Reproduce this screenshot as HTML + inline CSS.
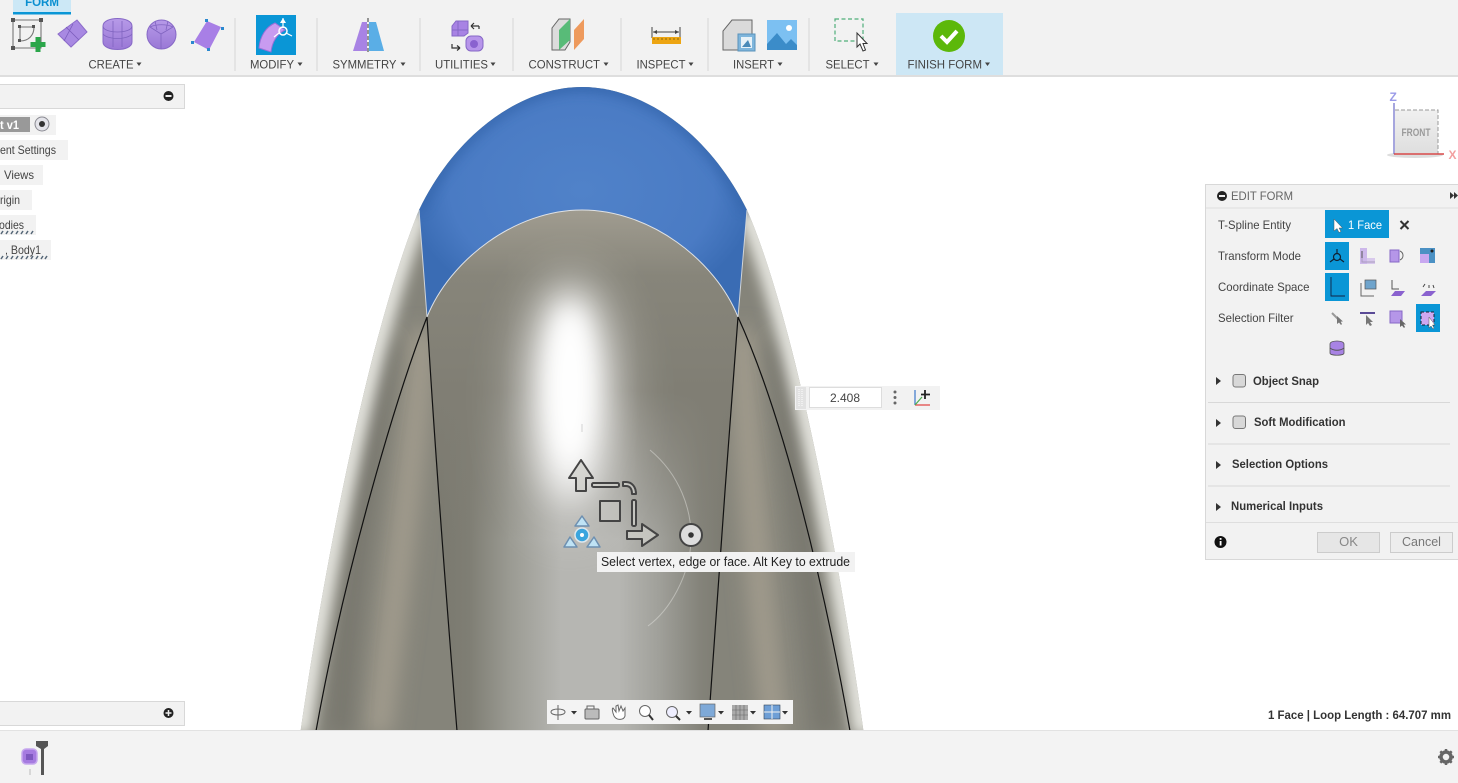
<!DOCTYPE html>
<html><head><meta charset="utf-8"><style>
html,body{margin:0;padding:0;background:#fff;width:1458px;height:783px;overflow:hidden}
svg{display:block}
text{font-family:"Liberation Sans",sans-serif;font-size:12px;fill:#444}
.b{font-weight:bold;fill:#333}
.m{text-anchor:middle}
</style></head><body>
<svg width="1458" height="783" viewBox="0 0 1458 783" xmlns="http://www.w3.org/2000/svg">
<defs>
<clipPath id="sil"><path d="M300 735C325 560 370 330 419 210C455 135 520 87 582 87C645 87 710 135 747 210C795 320 840 560 864 735Z"/></clipPath>
<clipPath id="mid"><path d="M427 317C435 450 448 620 457 735L708 735C716 610 728 450 738 317C715 260 650 210 582 210C515 210 450 260 427 317Z"/></clipPath>
<linearGradient id="cg" gradientUnits="userSpaceOnUse" x1="430" y1="0" x2="735" y2="0">
<stop offset="0" stop-color="#78776d"/><stop offset=".13" stop-color="#7f7e74"/><stop offset=".26" stop-color="#9a9a92"/><stop offset=".43" stop-color="#b6b6b2"/><stop offset=".62" stop-color="#b6b6b2"/><stop offset=".75" stop-color="#a0a09a"/><stop offset=".885" stop-color="#84837a"/><stop offset="1" stop-color="#78776d"/></linearGradient>
<linearGradient id="topg" gradientUnits="userSpaceOnUse" x1="0" y1="210" x2="0" y2="540">
<stop offset="0" stop-color="#a09c90"/><stop offset=".2" stop-color="#87857a"/><stop offset=".55" stop-color="#807e74"/><stop offset="1" stop-color="#807e74" stop-opacity="0"/></linearGradient>
<radialGradient id="bl" gradientUnits="userSpaceOnUse" cx="582" cy="190" r="175" gradientTransform="translate(582 190) scale(1 .72) translate(-582 -190)">
<stop offset="0" stop-color="#5082c9"/><stop offset=".75" stop-color="#4a7bc4"/><stop offset="1" stop-color="#3a6cb4"/></radialGradient>
<filter id="b30" x="-200%" y="-80%" width="500%" height="260%"><feGaussianBlur stdDeviation="24"/></filter>
<filter id="b18" x="-150%" y="-60%" width="400%" height="220%"><feGaussianBlur stdDeviation="17"/></filter>
<filter id="b8" x="-150%" y="-60%" width="400%" height="220%"><feGaussianBlur stdDeviation="11"/></filter>
<filter id="bv" filterUnits="userSpaceOnUse" x="250" y="80" width="660" height="700"><feGaussianBlur stdDeviation="7"/></filter>
<filter id="bw" filterUnits="userSpaceOnUse" x="250" y="100" width="660" height="680"><feGaussianBlur stdDeviation="10"/></filter>
<filter id="bb" filterUnits="userSpaceOnUse" x="380" y="60" width="400" height="200"><feGaussianBlur stdDeviation="5"/></filter>
<linearGradient id="pu" x1="0" y1="0" x2="0" y2="1"><stop offset="0" stop-color="#b79ae8"/><stop offset="1" stop-color="#9a78d6"/></linearGradient>
<linearGradient id="cube" x1="0" y1="0" x2="0" y2="1"><stop offset="0" stop-color="#f0f0f0"/><stop offset="1" stop-color="#dedede"/></linearGradient>
</defs>
<rect width="1458" height="783" fill="#fff"/>

<!-- body -->
<g clip-path="url(#sil)">
<rect x="290" y="80" width="590" height="660" fill="#85847a"/>
<g fill="none">
<path d="M423 330C418 420 395 600 378 735" stroke="#a19b8d" stroke-width="26" filter="url(#bw)"/>
<path d="M742 330C745 420 760 600 775 735" stroke="#a19b8d" stroke-width="26" filter="url(#bw)"/>
<path d="M385 340C375 420 345 600 340 735" stroke="#74736a" stroke-width="18" filter="url(#bw)"/>
<path d="M780 340C790 420 815 600 825 735" stroke="#74736a" stroke-width="18" filter="url(#bw)"/>
<path d="M300 735C325 560 370 330 419 210" stroke="#e6e6e0" stroke-width="22" filter="url(#bv)"/>
<path d="M864 735C840 560 795 320 747 210" stroke="#e6e6e0" stroke-width="22" filter="url(#bv)"/>
</g>
<g clip-path="url(#mid)">
<rect x="420" y="200" width="330" height="540" fill="url(#cg)"/>
<rect x="420" y="200" width="330" height="345" fill="url(#topg)"/>
<ellipse cx="570" cy="400" rx="60" ry="130" fill="#fff" opacity=".35" filter="url(#b30)"/>
<ellipse cx="570" cy="395" rx="36" ry="105" fill="#fff" opacity=".9" filter="url(#b18)"/>
<ellipse cx="570" cy="385" rx="20" ry="75" fill="#fff" filter="url(#b8)"/>
</g>
<path d="M419 210C455 135 520 87 582 87C645 87 710 135 747 210L738 317C715 260 650 210 582 210C515 210 450 260 427 317Z" fill="url(#bl)"/>
<path d="M419 210C455 135 520 87 582 87C645 87 710 135 747 210" fill="none" stroke="#3566ac" stroke-width="12" filter="url(#bb)" opacity=".7"/>
</g>
<path d="M427 317C450 260 515 210 582 210C650 210 715 260 738 317" fill="none" stroke="#dfe2e6" stroke-width="1"/>
<path d="M419 210L427 317M747 210L738 317" fill="none" stroke="#d0d4d8" stroke-width="1"/>
<path d="M427 317C395 400 345 570 316 731M427 317C435 450 448 620 457 731M738 317C728 450 716 610 708 731M738 317C785 420 825 590 850 731" fill="none" stroke="#111" stroke-width="1.200"/>
<path d="M650 450C680 475 692 510 691 540C690 575 670 610 648 626" fill="none" stroke="#e8e8e4" stroke-width="1" opacity=".45"/>
<path d="M582 424v8" stroke="#999" stroke-width="1" opacity=".4"/>

<!-- gizmo -->
<g fill="#cfcfca" fill-opacity=".75" stroke="#444" stroke-width="2" stroke-linejoin="round">
<path d="M581 460L593 478H586V491H576V478H569Z"/>
<rect x="592" y="483" width="27" height="4" rx="1.500"/>
<path d="M623 482h3c6 0 10 5 10 12h-4c0-5-2-8-6-8h-3z"/>
<rect x="632" y="500" width="4" height="26" rx="1.500"/>
<rect x="600" y="501" width="20" height="20" fill-opacity=".45"/>
<path d="M627 531H642V524L658 535L642 546V539H627Z"/>
</g>
<circle cx="691" cy="535" r="11" fill="#ddd" stroke="#444" stroke-width="2"/><circle cx="691" cy="535" r="2.800" fill="#333"/>
<g stroke="#6d8fb0" stroke-width="1.500" fill="#bfe3f5" stroke-linejoin="round">
<path d="M582 516L589 526H575Z"/><path d="M570 537L577 547H564Z"/><path d="M594 537L600 547H587Z"/>
</g>
<circle cx="582" cy="535" r="7" fill="#3aa5de" stroke="#dfe8ee" stroke-width="1.500"/><circle cx="582" cy="535" r="2" fill="#fff"/>

<!-- tooltip -->
<rect x="597" y="552" width="258" height="20" fill="#f2f2f2"/>
<text x="601" y="566" textLength="249" lengthAdjust="spacingAndGlyphs" style="fill:#222;font-size:12.500px">Select vertex, edge or face. Alt Key to extrude</text>

<!-- value input -->
<rect x="795" y="386" width="145" height="24" fill="#f2f2f2"/>
<rect x="796" y="387" width="10" height="22" fill="#e2e2e2"/>
<path d="M799 389v18M802 389v18" stroke="#fff" stroke-dasharray="1 1"/>
<rect x="809.500" y="387.500" width="72" height="20" fill="#fff" stroke="#ddd"/>
<text x="845" y="402" class="m">2.408</text>
<circle cx="895" cy="392" r="1.500" fill="#666"/><circle cx="895" cy="397.500" r="1.500" fill="#666"/><circle cx="895" cy="403" r="1.500" fill="#666"/>
<path d="M915 390V405" stroke="#3b78c9" stroke-width="1.200"/><path d="M915 405H930" stroke="#e2403f" stroke-width="1.200"/><path d="M915 405L922 397" stroke="#4caf50" stroke-width="1.200"/>
<path d="M925 390v9M921 394.500h9" stroke="#222" stroke-width="1.800"/>

<!-- toolbar -->
<rect x="0" y="0" width="1458" height="75" fill="#f2f2f2"/>
<rect x="0" y="75" width="1458" height="2" fill="#dedede"/>
<rect x="13" y="0" width="58" height="13" fill="#cce8f6"/>
<rect x="13" y="12" width="58" height="2.500" fill="#0a96d6"/>
<text x="42" y="6" class="m" style="fill:#0a8fd0;font-weight:bold;font-size:11.500px">FORM</text>
<rect x="896" y="13" width="107" height="62" fill="#cde7f5"/>
<path d="M235 18V71M317 18V71M420 18V71M513 18V71M621 18V71M708 18V71M809 18V71" stroke="#e0e0e0" stroke-width="1.500"/>
<g>
<text x="88.500" y="68.500" textLength="45" lengthAdjust="spacingAndGlyphs">CREATE</text>
<text x="250" y="68.500" textLength="44" lengthAdjust="spacingAndGlyphs">MODIFY</text>
<text x="332.500" y="68.500" textLength="64" lengthAdjust="spacingAndGlyphs">SYMMETRY</text>
<text x="435" y="68.500" textLength="53" lengthAdjust="spacingAndGlyphs">UTILITIES</text>
<text x="528.500" y="68.500" textLength="71.500" lengthAdjust="spacingAndGlyphs">CONSTRUCT</text>
<text x="636.500" y="68.500" textLength="49" lengthAdjust="spacingAndGlyphs">INSPECT</text>
<text x="733" y="68.500" textLength="41" lengthAdjust="spacingAndGlyphs">INSERT</text>
<text x="825.500" y="68.500" textLength="44" lengthAdjust="spacingAndGlyphs">SELECT</text>
<text x="907.500" y="68.500" textLength="74.500" lengthAdjust="spacingAndGlyphs">FINISH FORM</text>
</g>
<path d="M136.500 62.500h5l-2.500 3.500zM297.500 62.500h5l-2.500 3.500zM400.500 62.500h5l-2.500 3.500zM490.500 62.500h5l-2.500 3.500zM603.500 62.500h5l-2.500 3.500zM688.500 62.500h5l-2.500 3.500zM777.500 62.500h5l-2.500 3.500zM873.500 62.500h5l-2.500 3.500zM985 62.500h5l-2.500 3.500z" fill="#444"/>
<!-- create icons -->
<g fill="none" stroke="#777" stroke-width="1.100">
<path d="M13 20H41V48H13Z"/><path d="M20 27H34M20 27V41M34 27C34 35 29 41 20 41"/>
</g>
<g fill="#555"><rect x="11" y="18" width="4" height="4"/><rect x="39" y="18" width="4" height="4"/><rect x="11" y="46" width="4" height="4"/><rect x="18" y="25" width="3" height="3"/><rect x="32" y="25" width="3" height="3"/><rect x="18" y="39" width="3" height="3"/></g>
<path d="M35.500 37h5v5h5v5h-5v5h-5v-5h-5v-5h5z" fill="#2ba64a"/>
<path d="M58 34L77 20L87 32L71 47Z" fill="#a889e2" stroke="#8c6cca"/><path d="M66 27L79 40M73 24L64 41" stroke="#7a5cbc" fill="none" stroke-width=".8"/>
<path d="M103 26C103 16 132 16 132 26V42C132 52 103 52 103 42Z" fill="url(#pu)" stroke="#8668c6"/><path d="M103 26C103 34 132 34 132 26M103 34C108 40 127 40 132 34M113 21V47M122 21V47" fill="none" stroke="#8064c0" stroke-width=".8"/>
<circle cx="161.500" cy="34.500" r="14.500" fill="url(#pu)" stroke="#8668c6"/><path d="M150 27C156 24 167 24 173 27M161 34L150 27M161 34L173 27M161 34V49M155 21L157 30M168 21L166 30" fill="none" stroke="#8064c0" stroke-width=".8"/>
<path d="M207 21L221 27L209 50L194 42Z" fill="#a87fe6"/>
<g fill="#2a88cf"><rect x="205" y="19" width="3" height="3"/><rect x="221" y="27" width="3" height="3"/><rect x="207" y="48" width="3" height="3"/><rect x="191" y="41" width="3" height="3"/></g>
<!-- modify -->
<rect x="256" y="15" width="40" height="40" fill="#0a96d6"/>
<path d="M259 48C260 36 266 27 275 23L285 30C277 34 272 42 271 52Z" fill="#c89bf0" stroke="#9a70d8"/>
<circle cx="283" cy="31" r="4" fill="none" stroke="#fff" stroke-width="1.500"/><path d="M283 18V28M279 33L274 37M286 33L292 36" stroke="#fff" stroke-width="1.200"/><path d="M283 18l-3 5h6z" fill="#fff"/>
<!-- symmetry -->
<path d="M362 22L353 51H367V22Z" fill="#a883e4"/>
<path d="M369 22H376L384 51H369Z" fill="#5aaee6"/>
<path d="M368 18V54" stroke="#555" stroke-dasharray="4 2" stroke-width="1.200"/>
<!-- utilities -->
<path d="M452 26L456 21H468V33L464 36H452Z" fill="#a883e4" stroke="#8668c6"/><path d="M458 21V36M452 30H468" stroke="#8668c6"/>
<path d="M479 26H471M471 26l3-3M471 26l3 3M479 26V29" fill="none" stroke="#333" stroke-width="1.200"/>
<path d="M452 44V48H460M460 48l-3-2.500M460 48l-3 2.500" fill="none" stroke="#333" stroke-width="1.200"/>
<rect x="466" y="36" width="17" height="15" rx="5" fill="#b795ea" stroke="#8668c6"/><circle cx="474" cy="44" r="4" fill="#8a62cf"/>
<!-- construct -->
<path d="M552 50V28L559 19H570V42L565 50Z" fill="#dcdcdc" stroke="#666"/><path d="M559 50V30L570 19V40Z" fill="#58bb78"/>
<path d="M574 50V30L584 19V39Z" fill="#ee9a5d"/>
<!-- inspect -->
<path d="M652 27V38M680 27V38M653 32H679" stroke="#444" fill="none"/><path d="M653 32l4-2v4zM679 32l-4-2v4z" fill="#444"/>
<rect x="652" y="37" width="29" height="7" fill="#eda512"/><path d="M654 38v2M658 38v2M662 38v2M666 38v2M670 38v2M674 38v2M678 38v2" stroke="#8a6a10"/>
<!-- insert -->
<path d="M723 50V31L732 20H752V36H739V50Z" fill="#dadada" stroke="#666"/>
<rect x="738" y="34" width="17" height="17" fill="#7fb6dc" stroke="#5a93bb"/><rect x="741" y="37" width="11" height="11" fill="#e8f2f8"/><path d="M742 47L748 40L751 47Z" fill="#4a8ab8"/>
<rect x="767" y="20" width="30" height="30" fill="#7cc0f2"/><circle cx="789" cy="28" r="3" fill="#fff"/><path d="M767 44L777 33L786 44L791 39L797 45V50H767Z" fill="#3b8cc9"/>
<!-- select -->
<rect x="835" y="19" width="28" height="22" fill="none" stroke="#4fae7a" stroke-width="1.200" stroke-dasharray="4 2.500"/>
<path d="M857 33V47L860 44L863 51L865.500 50L863 43.500H867Z" fill="#fff" stroke="#333"/>
<!-- finish -->
<circle cx="949" cy="36" r="16" fill="#5cb80a"/>
<path d="M941 36L947 42L957 31" fill="none" stroke="#fff" stroke-width="4"/>

<!-- browser -->
<rect x="-2" y="84.500" width="186.500" height="24" fill="#f2f2f2" stroke="#d8d8d8"/>
<circle cx="168.500" cy="96" r="5" fill="#222"/><rect x="165.500" y="95" width="6" height="2" fill="#eee"/>
<rect x="0" y="115" width="56" height="20" fill="#f2f2f2"/><rect x="0" y="117" width="30" height="15" fill="#999"/>
<text x="0" y="129" textLength="19" lengthAdjust="spacingAndGlyphs" style="fill:#fff;font-weight:bold">t v1</text>
<circle cx="42" cy="124" r="7" fill="#e4e4ea" stroke="#8a8a92"/><circle cx="42" cy="124" r="3" fill="#333"/>
<rect x="0" y="140" width="68" height="20" fill="#f2f2f2"/><text x="0" y="154" textLength="56" lengthAdjust="spacingAndGlyphs">ent Settings</text>
<rect x="0" y="165" width="43" height="20" fill="#f2f2f2"/><text x="4" y="179" textLength="30" lengthAdjust="spacingAndGlyphs">Views</text>
<rect x="0" y="190" width="32" height="20" fill="#f2f2f2"/><text x="0" y="204" textLength="20" lengthAdjust="spacingAndGlyphs">rigin</text>
<rect x="0" y="215" width="36" height="20" fill="#f2f2f2"/><text x="-1" y="229" textLength="25" lengthAdjust="spacingAndGlyphs">odies</text>
<path d="M1 234l2-3M6 234l2-3M11 234l2-3M16 234l2-3M21 234l2-3M26 234l2-3M31 234l2-3" stroke="#567" stroke-width="1.500"/>
<rect x="0" y="240" width="51" height="20" fill="#f2f2f2"/><text x="5" y="254" textLength="36" lengthAdjust="spacingAndGlyphs">, Body1</text>
<path d="M1 259l2-3M6 259l2-3M11 259l2-3M16 259l2-3M21 259l2-3M26 259l2-3M31 259l2-3M36 259l2-3M41 259l2-3M45 259l2-3" stroke="#567" stroke-width="1.500"/>
<rect x="-2" y="701.500" width="186.500" height="24" fill="#f2f2f2" stroke="#d8d8d8"/>
<circle cx="168.500" cy="713" r="5" fill="#222"/><path d="M165.500 713h6M168.500 710v6" stroke="#eee" stroke-width="1.500"/>

<!-- viewcube -->
<ellipse cx="1415" cy="155" rx="28" ry="3" fill="#ddd"/>
<rect x="1395" y="110" width="43" height="44" fill="url(#cube)"/>
<path d="M1395 110H1438V154" fill="none" stroke="#999" stroke-dasharray="4 2"/>
<path d="M1394 103V154" stroke="#6a6ac8" stroke-width="1.200"/><path d="M1394 154H1444" stroke="#d84a4a" stroke-width="1.500"/>
<text x="1416" y="136" class="m" textLength="29" lengthAdjust="spacingAndGlyphs" style="fill:#9a9a9a;font-weight:bold;font-size:11px">FRONT</text>
<text x="1389.500" y="101" style="fill:#9a9ae8;font-weight:bold">Z</text>
<text x="1448.500" y="159" style="fill:#f2a0a0;font-weight:bold">X</text>

<!-- edit form panel -->
<rect x="1205.500" y="184.500" width="260" height="375" fill="#f2f2f2" stroke="#d8d8d8"/>
<path d="M1206 208H1458" stroke="#dedede"/>
<circle cx="1222" cy="196" r="5" fill="#222"/><rect x="1219" y="195" width="6" height="2" fill="#eee"/>
<text x="1231" y="200" textLength="62" lengthAdjust="spacingAndGlyphs" style="fill:#666">EDIT FORM</text>
<path d="M1450 192v7l4-3.500zM1454 192v7l4-3.500z" fill="#333"/>
<text x="1218" y="229" textLength="73" lengthAdjust="spacingAndGlyphs">T-Spline Entity</text>
<text x="1218" y="260" textLength="83" lengthAdjust="spacingAndGlyphs">Transform Mode</text>
<text x="1218" y="291" textLength="91.500" lengthAdjust="spacingAndGlyphs">Coordinate Space</text>
<text x="1218" y="322" textLength="75.500" lengthAdjust="spacingAndGlyphs">Selection Filter</text>
<rect x="1325" y="210" width="64" height="28" fill="#0a96d6"/>
<path d="M1334 219V231L1337 228.500L1339 232.500L1341 231.500L1339 228H1342.500Z" fill="#fff" stroke="#555" stroke-width=".5"/>
<text x="1348" y="229" textLength="34" lengthAdjust="spacingAndGlyphs" style="fill:#fff">1 Face</text>
<path d="M1400.500 221L1408.500 229M1408.500 221L1400.500 229" stroke="#333" stroke-width="2"/>
<rect x="1325" y="242" width="24" height="28" fill="#0a96d6"/>
<rect x="1325" y="273" width="24" height="28" fill="#0a96d6"/>
<rect x="1416" y="304" width="24" height="28" fill="#0a96d6"/>
<!-- transform row -->
<circle cx="1337" cy="257" r="3.500" fill="none" stroke="#123" stroke-width="1.200"/><path d="M1337 249V254M1334 259L1330 262M1340 259L1344 262" stroke="#123" stroke-width="1.200"/>
<rect x="1360" y="248" width="7" height="16" fill="#cdb8ea"/><path d="M1362 251V262H1375" fill="none" stroke="#555"/><rect x="1360" y="258" width="15" height="6" fill="#cdb8ea" opacity=".7"/>
<rect x="1390" y="250" width="9" height="12" fill="#b596e8" stroke="#8668c6"/><path d="M1400 251C1404 253 1404 258 1400 260" fill="none" stroke="#666"/>
<rect x="1420" y="248" width="15" height="15" fill="#4b91c4"/><rect x="1420" y="254" width="9" height="9" fill="#c8a8f0"/><circle cx="1432" cy="251" r="1.500" fill="#222"/>
<!-- coord row -->
<path d="M1331 277V296H1345" fill="none" stroke="#124" stroke-width=".9"/>
<path d="M1361 283V296H1374" fill="none" stroke="#666"/><rect x="1365" y="280" width="11" height="9" fill="#6fa4cc" stroke="#555" stroke-width=".7"/>
<path d="M1391 296H1401L1405 291H1395Z" fill="#8a62cf"/><path d="M1392 280V289H1399" fill="none" stroke="#555"/>
<path d="M1421 296H1431L1436 291H1426Z" fill="#8a62cf"/><path d="M1423 287l2-3M1429 285v3M1433 285l1 3" stroke="#444"/>
<!-- filter row -->
<path d="M1332 313L1341 322" stroke="#999" stroke-width="2"/><path d="M1337 316V324L1339 322.500L1341 325L1342 324L1340.500 321.500H1343Z" fill="#777"/>
<path d="M1360 313H1375" stroke="#5a4a96" stroke-width="2"/><path d="M1366 315V325L1368 323L1370 326L1372 325L1370 322H1373Z" fill="#777"/>
<rect x="1390" y="311" width="12" height="12" fill="#b596e8" stroke="#8668c6"/><path d="M1400 319V327L1402 325.500L1404 328L1405 327L1403.500 324.500H1406Z" fill="#666"/>
<rect x="1421" y="312" width="13" height="13" fill="#cda8f0" stroke="#123" stroke-dasharray="3 2"/><path d="M1429 317V328L1431 326L1433 329L1434 328L1432.500 325H1435Z" fill="#fff" stroke="#555" stroke-width=".5"/>
<path d="M1330 344C1330 340 1344 340 1344 344V353C1344 356 1330 356 1330 353Z" fill="#a883e4" stroke="#555" stroke-width=".8"/><path d="M1330 348C1334 351 1340 351 1344 348" fill="none" stroke="#555"/>
<!-- sections -->
<g fill="#333">
<path d="M1216 377v8l5-4z"/><path d="M1216 419v8l5-4z"/><path d="M1216 461v8l5-4z"/><path d="M1216 503v8l5-4z"/>
</g>
<rect x="1233" y="374.500" width="12.500" height="12.500" rx="2.500" fill="#d8d8d8" stroke="#777"/>
<rect x="1233" y="416" width="12.500" height="12.500" rx="2.500" fill="#d8d8d8" stroke="#777"/>
<text x="1253" y="385" class="b" textLength="66" lengthAdjust="spacingAndGlyphs">Object Snap</text>
<text x="1254" y="426" class="b" textLength="91.500" lengthAdjust="spacingAndGlyphs">Soft Modification</text>
<text x="1232" y="468" class="b" textLength="96" lengthAdjust="spacingAndGlyphs">Selection Options</text>
<text x="1231" y="510" class="b" textLength="92" lengthAdjust="spacingAndGlyphs">Numerical Inputs</text>
<path d="M1208 402.500H1450M1208 444H1450M1208 486H1450" stroke="#d8d8d8"/>
<path d="M1206 522.500H1458" stroke="#dedede"/>
<circle cx="1220.500" cy="542" r="6" fill="#111"/>
<rect x="1219.700" y="541" width="1.800" height="4.500" fill="#fff"/><rect x="1219.700" y="538" width="1.800" height="1.800" fill="#fff"/>
<rect x="1317.500" y="532.500" width="62" height="20" fill="#e6e6e6" stroke="#ccc"/>
<text x="1348.500" y="546" class="m" style="fill:#888;font-size:13px">OK</text>
<rect x="1390.500" y="532.500" width="62" height="20" fill="#ededed" stroke="#ccc"/>
<text x="1421.500" y="546" class="m" style="fill:#777;font-size:12.500px">Cancel</text>

<!-- nav bar -->
<rect x="547" y="700" width="246" height="24" fill="#f3f3f3"/>
<g fill="none" stroke="#666" stroke-width="1">
<path d="M558 705V720M551 712C551 708 565 708 565 712C565 716 551 716 551 712Z"/>
<rect x="585" y="709" width="14" height="10" rx="1" fill="#bbb"/><path d="M587 709V706H594V709"/>
<path d="M614 716C612 711 612 708 613 708L616 712V706L618 705L619 711L621 706L623 711L625 708V716C624 720 617 721 614 716Z" fill="#fff"/>
<circle cx="645" cy="711" r="5.500" fill="#fff"/><path d="M649 715L653 720" stroke="#333" stroke-width="2"/>
<circle cx="672" cy="712" r="5.500" fill="#eef"/><path d="M676 716L680 720" stroke="#333" stroke-width="2"/>
</g>
<rect x="700" y="704" width="15" height="13" fill="#7ea9d8" stroke="#666" stroke-width=".7"/><rect x="704" y="718" width="8" height="2" fill="#555"/>
<rect x="732" y="705" width="16" height="15" fill="#aaa"/><path d="M736 705v15M740 705v15M744 705v15M732 710h16M732 715h16" stroke="#666" stroke-width=".6"/>
<rect x="764" y="705" width="16" height="14" fill="#6e9fd6" stroke="#345" stroke-width=".6"/><path d="M772 705V719M764 712H780" stroke="#f0f0f0"/>
<path d="M571 711h6l-3 3.500zM686 711h6l-3 3.500zM718 711h6l-3 3.500zM750 711h6l-3 3.500zM782 711h6l-3 3.500z" fill="#333"/>

<!-- bottom bar -->
<rect x="0" y="731" width="1458" height="52" fill="#f3f3f3"/>
<path d="M0 730.500H1458" stroke="#e2e2e2"/>
<rect x="22" y="749" width="15" height="15" rx="4" fill="#a67be0" stroke="#c6a8ee" stroke-width="1.500"/><rect x="26" y="754" width="7" height="6" fill="#7e58bf"/>
<path d="M30 769v6" stroke="#bbb"/>
<path d="M36 741H48V746L44 749V775H41V749L36 746Z" fill="#555"/>
<g transform="translate(1446 757)">
<circle r="5" fill="none" stroke="#666" stroke-width="3.500"/>
<path d="M0-8V-5M0 5V8M-8 0H-5M5 0H8M-5.700-5.700L-3.500-3.500M3.500 3.500L5.700 5.700M-5.700 5.700L-3.500 3.500M3.500-3.500L5.700-5.700" stroke="#666" stroke-width="2.500"/>
</g>
<text x="1268" y="719" class="b" textLength="183" lengthAdjust="spacingAndGlyphs">1 Face | Loop Length : 64.707 mm</text>
</svg>
</body></html>
